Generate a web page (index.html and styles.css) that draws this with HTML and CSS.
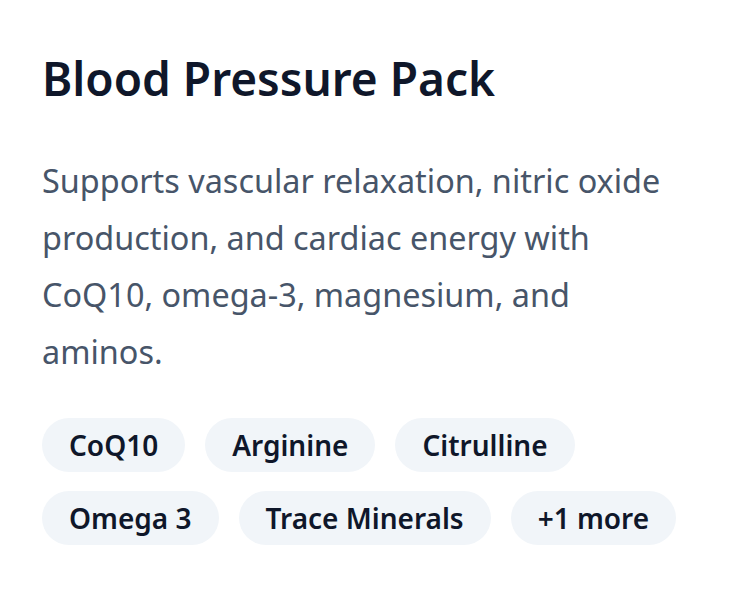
FILE: index.html
```html
<!DOCTYPE html>
<html lang="en">
<head>
    <meta charset="UTF-8">
    <meta name="viewport" content="width=device-width, initial-scale=1.0">
    <title>Blood Pressure Pack</title>
    <link rel="stylesheet" href="styles.css">
</head>
<body>
    <div class="card">
        <h1 class="pack-title">Blood Pressure Pack</h1>
        <p class="pack-desc">Supports vascular relaxation, nitric oxide production, and cardiac energy with CoQ10, omega-3, magnesium, and aminos.</p>
        <div class="tags">
            <span class="tag">CoQ10</span>
            <span class="tag">Arginine</span>
            <span class="tag">Citrulline</span>
            <span class="tag">Omega 3</span>
            <span class="tag">Trace Minerals</span>
            <span class="tag">+1 more</span>
        </div>
    </div>
</body>
</html>
```

FILE: styles.css
```css
body {
    font-family: "Noto Sans", "Open Sans", sans-serif;
    margin: 0;
    background: #ffffff;
}
.card {
    padding: 50px 42px 40px;
    width: 650px;
}
.pack-title {
    margin: 0;
    font-size: 46px;
    line-height: 56px;
    font-weight: 600;
    color: #0f172a;
}
.pack-desc {
    margin: 46px 0 0;
    font-size: 32.4px;
    line-height: 57px;
    color: #475569;
}
.tags {
    display: flex;
    flex-wrap: wrap;
    gap: 19px 20px;
    margin-top: 38px;
}
.tag {
    background: #f1f5f9;
    color: #0f172a;
    font-size: 28px;
    font-weight: 600;
    line-height: 54px;
    padding: 0 27px;
    border-radius: 27px;
}
```
